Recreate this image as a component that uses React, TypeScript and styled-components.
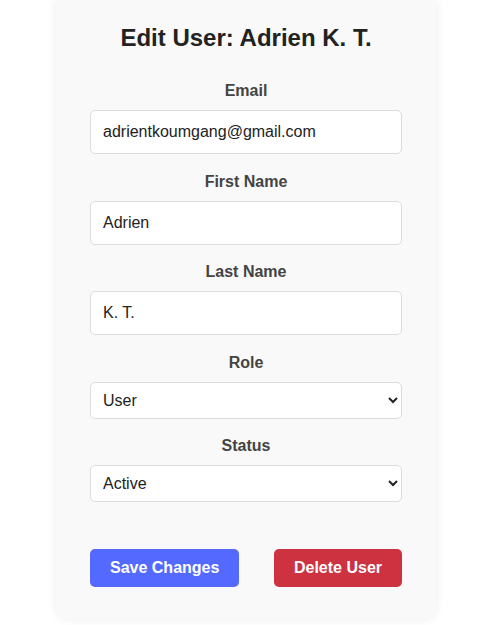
import React from "react";
import styled, { createGlobalStyle } from "styled-components";

const GlobalStyle = createGlobalStyle`
  html, body {
    margin: 0;
    padding: 0;
    background: #ffffff;
    font-family: "Liberation Sans", Arial, Helvetica, sans-serif;
  }
  * { box-sizing: border-box; }
`;

const Page = styled.div`
  display: flex;
  justify-content: center;
  padding-right: 12px;
  min-height: 625px;
`;

const Card = styled.form`
  width: 380px;
  height: 619px;
  background: #f9f9f9;
  border-radius: 0 0 12px 12px;
  box-shadow: 0 0 10px rgba(0, 0, 0, 0.08);
  padding: 24px 34px 32px;
  display: flex;
  flex-direction: column;
`;

const Title = styled.h2`
  margin: 0 0 31px;
  font-size: 24px;
  line-height: 27px;
  font-weight: 700;
  color: #222;
  text-align: center;
`;

const Group = styled.div`
  display: flex;
  flex-direction: column;
  margin-bottom: 18.5px;
`;

const Label = styled.label`
  display: block;
  font-size: 16px;
  line-height: 18px;
  font-weight: 700;
  color: #444;
  text-align: center;
  margin-bottom: 10px;
`;

const TextInput = styled.input`
  width: 100%;
  height: 44px;
  padding: 0 12px;
  border: 1px solid #dcdcdc;
  border-radius: 5px;
  background: #fff;
  font-family: "Liberation Sans", Arial, sans-serif;
  font-size: 16px;
  color: #222;
  outline: none;
`;

const Select = styled.select`
  width: 100%;
  height: 37px;
  padding: 0 6px 0 8px;
  border: 1px solid #dcdcdc;
  border-radius: 5px;
  background: #fff;
  font-family: "Liberation Sans", Arial, sans-serif;
  font-size: 16px;
  color: #222;
  outline: none;
`;

const Actions = styled.div`
  display: flex;
  justify-content: space-between;
  margin-top: 28.5px;
`;

const Button = styled.button<{ $variant: "primary" | "danger" }>`
  height: 38px;
  padding: 0 20px;
  border: none;
  border-radius: 5px;
  font-family: "Liberation Sans", Arial, sans-serif;
  font-size: 16px;
  font-weight: 700;
  color: #fff;
  cursor: pointer;
  background: ${(p) => (p.$variant === "primary" ? "#5469ff" : "#cd3241")};
`;

export default function App() {
  return (
    <>
      <GlobalStyle />
      <Page>
        <Card onSubmit={(e) => e.preventDefault()}>
          <Title>Edit User: Adrien K. T.</Title>
          <Group>
            <Label htmlFor="email">Email</Label>
            <TextInput id="email" type="email" defaultValue="adrientkoumgang@gmail.com" />
          </Group>
          <Group>
            <Label htmlFor="first">First Name</Label>
            <TextInput id="first" type="text" defaultValue="Adrien" />
          </Group>
          <Group>
            <Label htmlFor="last">Last Name</Label>
            <TextInput id="last" type="text" defaultValue="K. T." />
          </Group>
          <Group>
            <Label htmlFor="role">Role</Label>
            <Select id="role" defaultValue="User">
              <option>User</option>
              <option>Admin</option>
            </Select>
          </Group>
          <Group>
            <Label htmlFor="status">Status</Label>
            <Select id="status" defaultValue="Active">
              <option>Active</option>
              <option>Inactive</option>
            </Select>
          </Group>
          <Actions>
            <Button type="submit" $variant="primary">Save Changes</Button>
            <Button type="button" $variant="danger">Delete User</Button>
          </Actions>
        </Card>
      </Page>
    </>
  );
}
